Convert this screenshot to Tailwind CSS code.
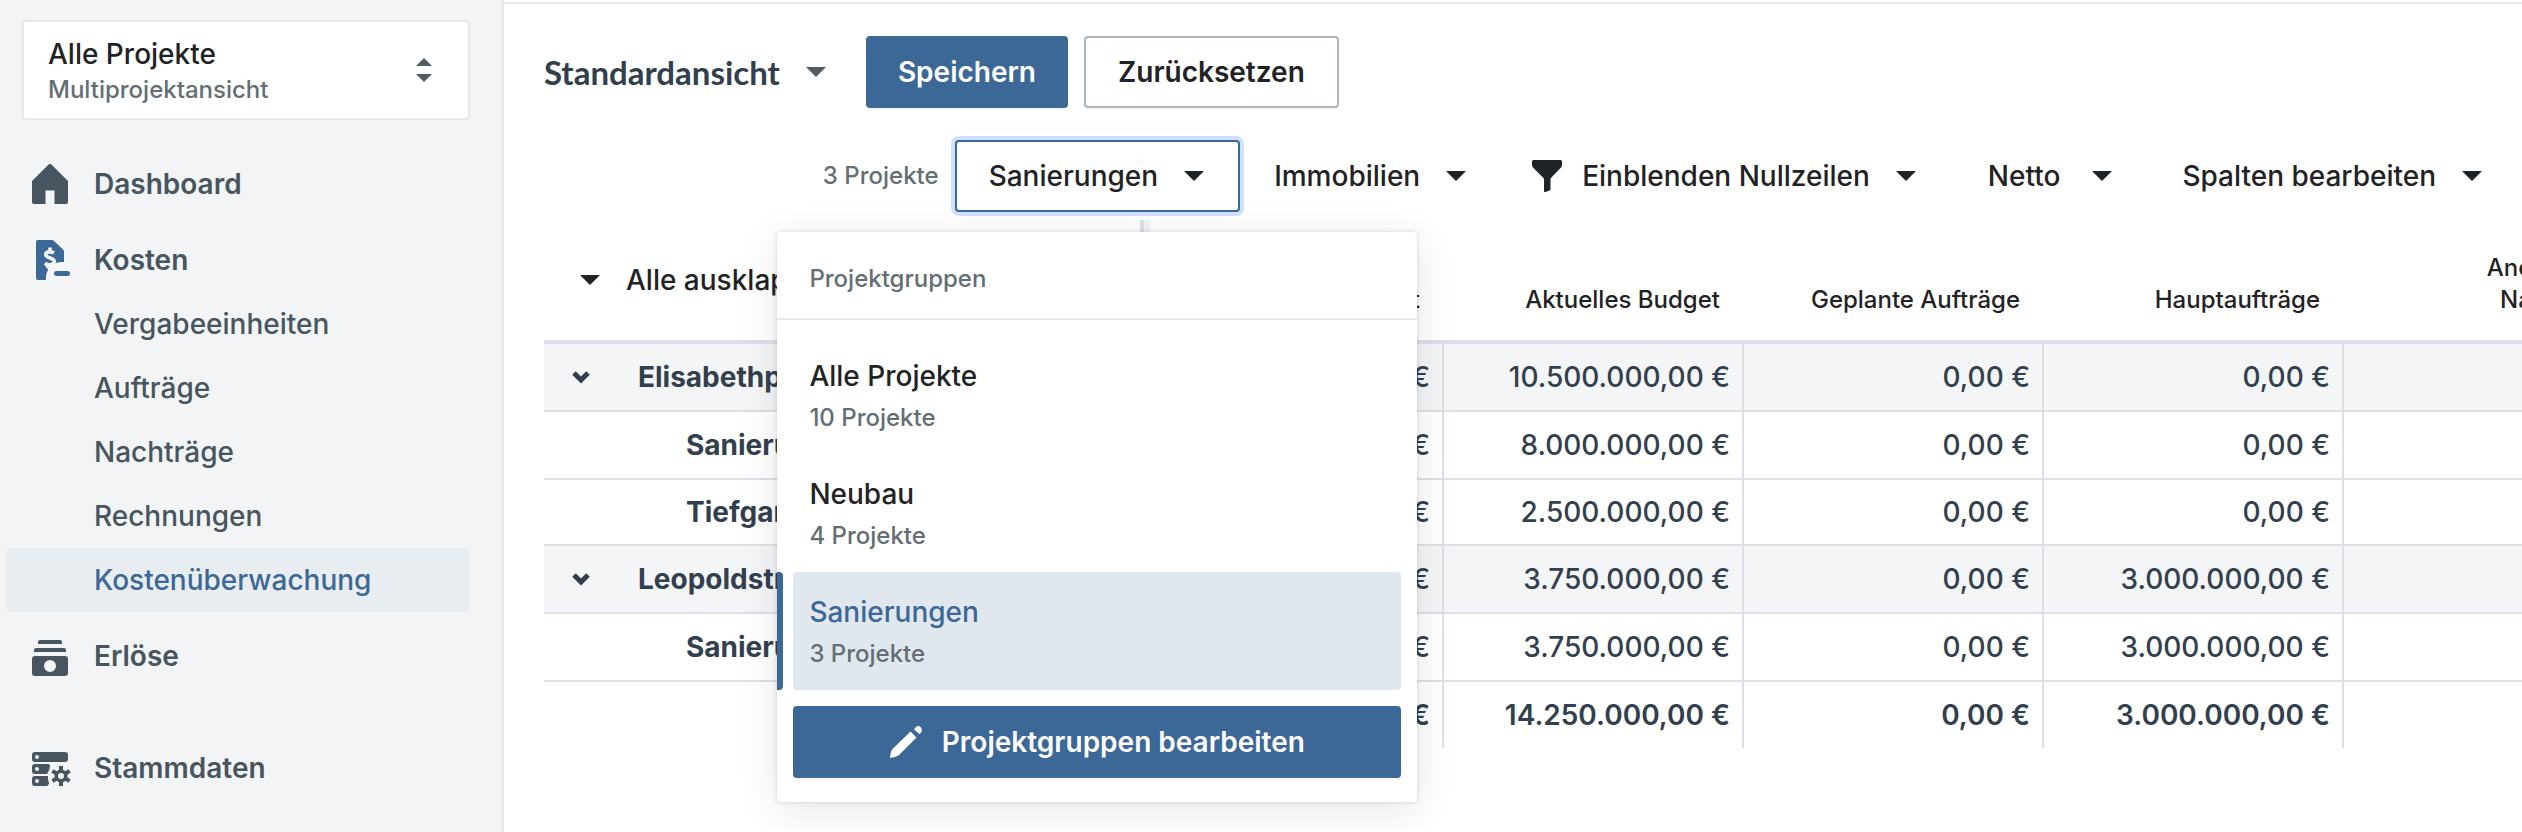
<!DOCTYPE html>
<html lang="de">
<head>
  <meta charset="UTF-8" />
  <meta name="viewport" content="width=device-width, initial-scale=1.0" />
  <title>Kostenüberwachung</title>
  <script src="https://cdn.jsdelivr.net/npm/@tailwindcss/browser@4"></script>
</head>
<body class="flex min-h-screen overflow-hidden bg-white font-[Inter,sans-serif] text-[28px] leading-10 font-medium text-[#1f2326]">

<!-- Seitenleiste -->
<aside class="w-[504px] shrink-0 border-r-2 border-[#e5e7eb] bg-[#f3f4f6] pt-5 pr-8 pl-1.5">
  <button type="button" class="ml-4 flex h-[100px] w-[448px] items-center justify-between rounded border-2 border-[#e5e7eb] bg-white pr-9 pl-6 text-left">
    <span class="pt-1">
      <span class="block leading-9">Alle Projekte</span>
      <span class="block text-2xl leading-9 text-[#636e75]">Multiprojektansicht</span>
    </span>
    <svg class="h-6 w-4" viewBox="0 0 16 24" fill="#515b61"><path d="M8 0l8 8H0zM0 16h16l-8 8z"/></svg>
  </button>

  <nav class="mt-8 text-[#475560]">
    <a href="#" class="flex h-16 items-center gap-[22px] pl-[26px] font-semibold">
      <svg class="h-10 w-10" viewBox="0 0 40 40" fill="currentColor"><path d="M16.600.6a2 2 0 0 1 2.800 0L36 17v21a2 2 0 0 1-2 2H22.500V26.500h-9V40H2a2 2 0 0 1-2-2V17z"/></svg>
      Dashboard
    </a>
    <a href="#" class="mt-3 flex h-16 items-center gap-[22px] pl-[26px] font-semibold">
      <svg class="h-10 w-10" viewBox="0 0 40 40" fill="#3b6896">
        <path d="M6 0h14q1 0 2 1l9 8.500q1 1 1 2v10.600A16 16 0 0 0 14 40H6a2 2 0 0 1-2-2V2a2 2 0 0 1 2-2z"/>
        <path d="M22 13c-2-1.300-8-2.300-8.300 1.500-.2 4 9 3 8.600 7.200-.4 3.800-6.300 3.600-9.300 1.400M18 7.500V12" fill="none" stroke="#f3f4f6" stroke-width="3.600"/>
        <path d="M12 24.500l6-.5 4 2-6 7v-3.500z" fill="#f3f4f6"/>
        <rect x="22" y="31" width="16" height="5" rx="2.500"/>
      </svg>
      Kosten
    </a>
    <a href="#" class="flex h-16 items-center pl-22">Vergabeeinheiten</a>
    <a href="#" class="flex h-16 items-center pl-22">Aufträge</a>
    <a href="#" class="flex h-16 items-center pl-22">Nachträge</a>
    <a href="#" class="flex h-16 items-center pl-22">Rechnungen</a>
    <a href="#" class="flex h-16 items-center rounded bg-[#e8edf1] pl-22 text-[#3b6896]">Kostenüberwachung</a>
    <a href="#" class="mt-3 flex h-16 items-center gap-[22px] pl-[26px] font-semibold">
      <svg class="h-10 w-10" viewBox="0 0 40 40" fill="currentColor">
        <path d="M8 4h20a2 2 0 0 1 2 2v2H6V6a2 2 0 0 1 2-2zM4 12h28a2 2 0 0 1 2 2v2H2v-2a2 2 0 0 1 2-2z"/>
        <path fill-rule="evenodd" d="M3 20h30a3 3 0 0 1 3 3v14a3 3 0 0 1-3 3H3a3 3 0 0 1-3-3V23a3 3 0 0 1 3-3zm15 4a6 6 0 1 0 0 12 6 6 0 0 0 0-12z"/>
      </svg>
      Erlöse
    </a>
    <a href="#" class="mt-12 flex h-16 items-center gap-[22px] pl-[26px] font-semibold">
      <svg class="h-10 w-10" viewBox="0 0 40 40" fill="currentColor">
        <path d="M3 4h30a3 3 0 0 1 3 3v4a3 3 0 0 1-3 3H3a3 3 0 0 1-3-3V7a3 3 0 0 1 3-3zM3 16h13a2 2 0 0 1 2 2c-.4 3-1.500 6-3 8H3a3 3 0 0 1-3-3v-4a3 3 0 0 1 3-3zM3 28h13c-.4 3 .2 5 1 6.500 0 2-1 3.500-3 3.500H3a3 3 0 0 1-3-3v-4a3 3 0 0 1 3-3z"/>
        <g fill="#f3f4f6"><circle cx="5" cy="9" r="2"/><circle cx="5" cy="21" r="2"/><circle cx="5" cy="33" r="2"/></g>
        <path d="M29 18v20M20.400 23l17.200 10M37.600 23L20.400 33" stroke="currentColor" stroke-width="4"/>
        <circle cx="29" cy="28" r="6.500"/>
        <circle cx="29" cy="28" r="3" fill="#f3f4f6"/>
      </svg>
      Stammdaten
    </a>
  </nav>
</aside>

<main class="mt-0.5 min-w-0 flex-1 border-t-2 border-[#e5e7eb] pt-8 pl-10">
  <!-- Ansicht -->
  <div class="flex h-[72px] items-center">
    <button type="button" class="flex items-center gap-[26px] font-[Lato,sans-serif] text-[33px] font-bold text-[#323f4f]">
      Standardansicht
      <svg class="h-2.5 w-5" viewBox="0 0 20 10" fill="#515b61"><path d="M0 0h20L10 10z"/></svg>
    </button>
    <button type="button" class="ml-10 h-full rounded bg-[#3b6896] px-8 font-semibold text-white shadow-[0_2px_0_#00000008]">Speichern</button>
    <button type="button" class="ml-4 h-full rounded border-2 border-[#adb5c2] bg-white px-8 font-semibold shadow-[0_2px_0_#00000008]">Zurücksetzen</button>
  </div>

  <!-- Filter -->
  <div class="mt-8 flex h-[72px] items-center justify-end pr-1 whitespace-nowrap">
    <span class="mr-4 text-2xl text-[#636e75]">3 Projekte</span>
    <div class="relative h-full">
      <button type="button" class="flex h-full items-center gap-[26px] rounded border-2 border-[#3b6896] bg-white pr-[34px] pl-8 ring-4 ring-[#d0e1fd]">
        Sanierungen
        <svg class="h-2.5 w-5" viewBox="0 0 20 10" fill="currentColor"><path d="M0 0h20L10 10z"/></svg>
      </button>

      <!-- Menü Projektgruppen -->
      <div class="absolute top-full left-1/2 z-10 mt-5 w-[640px] -translate-x-1/2 rounded bg-white pb-6 shadow-[0_0_4px_#00000026,0_8px_40px_#0000001a]">
        <h2 class="border-b-2 border-[#e5e7eb] px-8 pt-7 pb-5 text-2xl leading-[38px] text-[#636e75]">Projektgruppen</h2>
        <ul class="px-4 pt-4">
          <li><button type="button" class="flex h-[118px] w-full flex-col justify-center rounded px-4 pt-1 text-left"><span class="leading-[42px]">Alle Projekte</span><span class="text-2xl leading-[42px] text-[#636e75]">10 Projekte</span></button></li>
          <li><button type="button" class="flex h-[118px] w-full flex-col justify-center rounded px-4 pt-1 text-left"><span class="leading-[42px]">Neubau</span><span class="text-2xl leading-[42px] text-[#636e75]">4 Projekte</span></button></li>
          <li class="relative">
            <span class="absolute inset-y-0 -left-4 w-1.5 rounded-r bg-[#3b6896]"></span>
            <button type="button" class="flex h-[118px] w-full flex-col justify-center rounded bg-[#e0e7ee] px-4 pt-1 text-left"><span class="leading-[42px] text-[#3b6896]">Sanierungen</span><span class="text-2xl leading-[42px] text-[#636e75]">3 Projekte</span></button>
          </li>
        </ul>
        <div class="px-4 pt-4">
          <button type="button" class="flex h-[72px] w-full items-center justify-center gap-5 rounded bg-[#3b6896] font-semibold text-white shadow-[0_2px_0_#00000008]">
            <svg class="size-8" viewBox="0 0 32 32" fill="currentColor"><path d="M20.500 5.500l6 6L9 29c-1 1-5 2.500-9 3 .4-4 1-7 2-8.500zM24 3.200l2-2.200c3-3 8 2 5 5.500l-1.500 1.800z"/></svg>
            Projektgruppen bearbeiten
          </button>
        </div>
      </div>
    </div>
    <button type="button" class="flex h-full items-center gap-[26px] pr-9 pl-[34px]">
      Immobilien
      <svg class="h-2.5 w-5" viewBox="0 0 20 10" fill="currentColor"><path d="M0 0h20L10 10z"/></svg>
    </button>
    <button type="button" class="flex h-full items-center gap-[26px] pr-9 pl-[30px]">
      <span class="flex items-center gap-5">
        <svg class="h-8 w-[30px]" viewBox="0 0 30 32" fill="currentColor"><path d="M1.500 0h27A1.500 1.500 0 0 1 30 1.500V5c0 1-.4 1.800-1 2.500L18.500 18.500V29c0 .8-.4 1.300-1 1.600L13.500 32c-1 .2-1.500-.3-1.500-1V18.500L1 7.500C.4 6.800 0 6 0 5V1.500A1.500 1.500 0 0 1 1.500 0z"/></svg>
        Einblenden Nullzeilen
      </span>
      <svg class="h-2.5 w-5" viewBox="0 0 20 10" fill="currentColor"><path d="M0 0h20L10 10z"/></svg>
    </button>
    <button type="button" class="flex h-full items-center gap-8 px-9">
      Netto
      <svg class="h-2.5 w-5" viewBox="0 0 20 10" fill="currentColor"><path d="M0 0h20L10 10z"/></svg>
    </button>
    <button type="button" class="flex h-full items-center gap-[26px] pr-9 pl-[34px]">
      Spalten bearbeiten
      <svg class="h-2.5 w-5" viewBox="0 0 20 10" fill="currentColor"><path d="M0 0h20L10 10z"/></svg>
    </button>
  </div>

  <!-- Kostentabelle -->
  <div class="mt-2 overflow-hidden">
    <table class="w-[2100px] table-fixed border-separate border-spacing-0 text-right text-[#323f4f]">
      <thead>
        <tr class="h-[124px] text-2xl leading-8 text-[#1f2326] *:border-b-4 *:border-[#dde1e7] *:font-medium">
          <th class="w-[600px] border-r-4 pl-9 text-left text-[28px] shadow-[6px_0_0_#f3f4f6]">
            <button type="button" class="flex items-center gap-[26px]">
              <svg class="h-2.5 w-5" viewBox="0 0 20 10" fill="currentColor"><path d="M0 0h20L10 10z"/></svg>
              Alle ausklappen
            </button>
          </th>
          <th class="pr-6 pb-6 align-bottom">Genehmigtes Budget</th>
          <th class="pr-6 pb-6 align-bottom">Aktuelles Budget</th>
          <th class="pr-6 pb-6 align-bottom">Geplante Aufträge</th>
          <th class="pr-6 pb-6 align-bottom">Hauptaufträge</th>
          <th class="pr-6 pb-6 align-bottom">Anerkannte<br>Nachträge</th>
        </tr>
      </thead>
      <tbody>
        <tr class="h-[68px] bg-[#f4f5f7] *:border-r-2 *:border-b-2 *:border-[#dde1e7] *:pr-3">
          <th class="pl-7 text-left font-bold"><span class="flex items-center gap-12"><svg class="h-5 w-[18px]" viewBox="0 0 18 20" fill="none" stroke="currentColor" stroke-width="5"><path d="M2 6l7 7 7-7"/></svg>Elisabethplatz</span></th>
          <td>10.000.000,00 €</td><td>10.500.000,00 €</td><td>0,00 €</td><td>0,00 €</td><td>0,00 €</td>
        </tr>
        <tr class="h-[68px] *:border-r-2 *:border-b-2 *:border-[#dde1e7] *:pr-3">
          <th class="pl-[142px] text-left font-bold">Sanierung Altbau</th>
          <td>7.500.000,00 €</td><td>8.000.000,00 €</td><td>0,00 €</td><td>0,00 €</td><td>0,00 €</td>
        </tr>
        <tr class="h-[66px] *:border-r-2 *:border-b-2 *:border-[#dde1e7] *:pr-3">
          <th class="pl-[142px] text-left font-bold">Tiefgarage</th>
          <td>2.500.000,00 €</td><td>2.500.000,00 €</td><td>0,00 €</td><td>0,00 €</td><td>0,00 €</td>
        </tr>
        <tr class="h-[68px] bg-[#f4f5f7] *:border-r-2 *:border-b-2 *:border-[#dde1e7] *:pr-3">
          <th class="pl-7 text-left font-bold"><span class="flex items-center gap-12"><svg class="h-5 w-[18px]" viewBox="0 0 18 20" fill="none" stroke="currentColor" stroke-width="5"><path d="M2 6l7 7 7-7"/></svg>Leopoldstraße</span></th>
          <td>3.750.000,00 €</td><td>3.750.000,00 €</td><td>0,00 €</td><td>3.000.000,00 €</td><td>0,00 €</td>
        </tr>
        <tr class="h-[68px] *:border-r-2 *:border-b-2 *:border-[#dde1e7] *:pr-3">
          <th class="pl-[142px] text-left font-bold">Sanierung</th>
          <td>3.750.000,00 €</td><td>3.750.000,00 €</td><td>0,00 €</td><td>3.000.000,00 €</td><td>0,00 €</td>
        </tr>
      </tbody>
      <tfoot>
        <tr class="h-[66px] font-semibold *:border-r-2 *:border-[#dde1e7] *:pr-3">
          <td></td><td>13.750.000,00 €</td><td>14.250.000,00 €</td><td>0,00 €</td><td>3.000.000,00 €</td><td>0,00 €</td>
        </tr>
      </tfoot>
    </table>
  </div>
</main>
</body>
</html>
